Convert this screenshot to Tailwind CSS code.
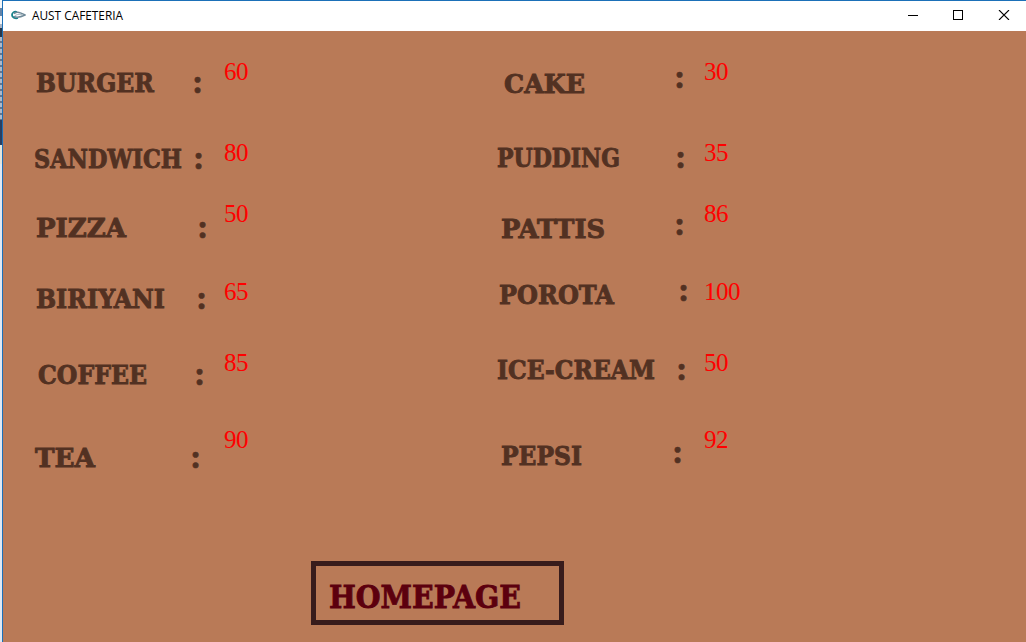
<!DOCTYPE html>
<html lang="en">
<head>
<meta charset="utf-8">
<title>AUST CAFETERIA</title>
<script src="https://cdn.jsdelivr.net/npm/@tailwindcss/browser@4"></script>
</head>
<body class="flex w-[1026px] h-[642px] overflow-hidden bg-[#b97a57]">
<!-- sliver of the window behind -->
<div class="w-[2px] shrink-0 flex flex-col">
  <div class="h-[8px] bg-[#f4f6f8]"></div><div class="h-[8px] bg-[#6283a8]"></div><div class="h-[8px] bg-[#f4f6f8]"></div>
  <div class="h-[4px] bg-[#a9b4c4]"></div><div class="h-[9px] bg-[#26384b]"></div>
  <div class="h-[83px] bg-[repeating-linear-gradient(#adb9ca_0_4px,#65758b_4px_6px)]"></div>
  <div class="h-[25px] bg-[#293f60]"></div><div class="h-[19px] bg-[#e3e5dc]"></div><div class="grow bg-[#dfe8f2]"></div>
</div>
<div class="grow min-w-0 flex flex-col border-l border-t border-[#1b70b8] bg-[#b97a57]">
  <header class="h-[30px] shrink-0 bg-white flex items-center pl-[8px]">
    <svg class="w-[15px] h-[10px] mr-[6px] mb-[2px]" viewBox="0 0 15 10" fill="none">
      <path d="M6 2C3 1 1 3 1 5s3 4 6 3" stroke="#16828a" stroke-width="1.8"/>
      <path d="M3 3.500C7 1 10 3 14 5C10 7 6 8 3 6.500" stroke="#6f8998" stroke-width="1.5"/>
      <path d="M4 5.500C7 4 9 4 12 5" stroke="#a6b9c3"/>
    </svg>
    <h1 class="w-[92px]"><svg class="block w-[92px] h-[18px] overflow-visible"><text x="0" y="13" textLength="91" lengthAdjust="spacingAndGlyphs" class="font-['Open_Sans',sans-serif] text-[12px] fill-black">AUST CAFETERIA</text></svg></h1>
    <div class="ml-auto mr-[16px] mb-[2px] flex items-center gap-[35px]">
      <svg class="w-[10px] h-[10px]" viewBox="0 0 10 10" shape-rendering="crispEdges"><path d="M0 5h10v1H0z"/></svg>
      <svg class="w-[10px] h-[10px]" viewBox="0 0 10 10" shape-rendering="crispEdges"><path d="M.5.5h9v9h-9z" fill="none" stroke="#000"/></svg>
      <svg class="w-[12px] h-[10px]" viewBox="0 0 12 10"><path d="M1 0l10 10M11 0l-10 10" fill="none" stroke="#000" stroke-width="1.1"/></svg>
    </div>
  </header>
  <main class="grow flex flex-col pt-[29px]">
    <div class="grid grid-cols-[187px_34px_266px_180px_34px_1fr] grid-rows-[81px_61px_78px_71px_77px_73px] items-start font-['Liberation_Serif',serif] [&>svg]:h-[28px] [&>svg]:overflow-visible [&>svg]:font-['DejaVu_Serif',serif] [&>svg]:text-[26px] [&>svg]:font-bold [&>svg]:fill-[#523122] [&>svg]:stroke-[#523122] [&>svg]:[stroke-width:0.9px] [&>b]:text-[34px] [&>b]:leading-[27px] [&>b]:text-[#523122] [&>b]:[-webkit-text-stroke:0.6px_#523122] [&>span]:text-[25px] [&>span]:tracking-[-0.5px] [&>span]:leading-[24px] [&>span]:text-[#ff0000]">
      <svg class="ml-[33px] mt-[8px] w-[118px]"><text y="24" textLength="118" lengthAdjust="spacingAndGlyphs">BURGER</text></svg><b class="ml-[2px] mt-[8px]">:</b><span>60</span>
      <svg class="ml-[14px] mt-[9px] w-[81px]"><text y="24" textLength="81" lengthAdjust="spacingAndGlyphs">CAKE</text></svg><b class="ml-[4px] mt-[3px]">:</b><span>30</span>

      <svg class="ml-[31px] mt-[3px] w-[148px]"><text y="24" textLength="148" lengthAdjust="spacingAndGlyphs">SANDWICH</text></svg><b class="ml-[3px] mt-[3px]">:</b><span>80</span>
      <svg class="ml-[7px] mt-[2px] w-[123px]"><text y="24" textLength="123" lengthAdjust="spacingAndGlyphs">PUDDING</text></svg><b class="ml-[5px] mt-[2px]">:</b><span>35</span>

      <svg class="ml-[33px] mt-[11px] w-[90px]"><text y="24" textLength="90" lengthAdjust="spacingAndGlyphs">PIZZA</text></svg><b class="ml-[7px] mt-[11px]">:</b><span>50</span>
      <svg class="ml-[11px] mt-[12px] w-[104px]"><text y="24" textLength="104" lengthAdjust="spacingAndGlyphs">PATTIS</text></svg><b class="ml-[4px] mt-[8px]">:</b><span>86</span>

      <svg class="ml-[33px] mt-[4px] w-[129px]"><text y="24" textLength="129" lengthAdjust="spacingAndGlyphs">BIRIYANI</text></svg><b class="ml-[6px] mt-[4px]">:</b><span>65</span>
      <svg class="ml-[9px] w-[115px]"><text y="24" textLength="115" lengthAdjust="spacingAndGlyphs">POROTA</text></svg><b class="ml-[8px] -mt-[4px]">:</b><span>100</span>

      <svg class="ml-[35px] mt-[9px] w-[109px]"><text y="24" textLength="109" lengthAdjust="spacingAndGlyphs">COFFEE</text></svg><b class="ml-[4px] mt-[9px]">:</b><span>85</span>
      <svg class="ml-[7px] mt-[4px] w-[158px]"><text y="24" textLength="158" lengthAdjust="spacingAndGlyphs">ICE-CREAM</text></svg><b class="ml-[6px] mt-[4px]">:</b><span>50</span>

      <svg class="ml-[32px] mt-[15px] w-[60px]"><text y="24" textLength="60" lengthAdjust="spacingAndGlyphs">TEA</text></svg><b class="mt-[15px]">:</b><span>90</span>
      <svg class="ml-[11px] mt-[13px] w-[81px]"><text y="24" textLength="81" lengthAdjust="spacingAndGlyphs">PEPSI</text></svg><b class="ml-[2px] mt-[10px]">:</b><span>92</span>
    </div>
    <button class="mt-[60px] ml-[308px] w-[253px] h-[64px] border-[5px] border-[#381c1c] pl-[13px] flex items-start">
      <svg class="w-[193px] h-[54px] overflow-visible font-['DejaVu_Serif',serif] text-[32px] font-bold fill-[#5c000e] stroke-[#5c000e] [stroke-width:0.9px]"><text y="42" textLength="192" lengthAdjust="spacingAndGlyphs">HOMEPAGE</text></svg>
    </button>
  </main>
</div>
</body>
</html>
